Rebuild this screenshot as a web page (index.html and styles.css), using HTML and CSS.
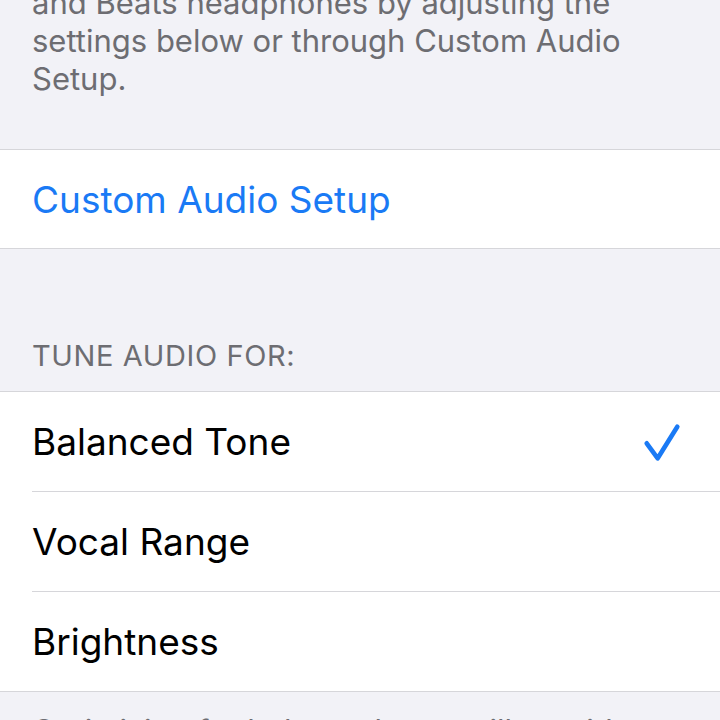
FILE: index.html
```html
<!DOCTYPE html>
<html lang="en">
<head>
<meta charset="UTF-8">
<meta name="viewport" content="width=device-width, initial-scale=1.0">
<title>Headphone Accommodations</title>
<link rel="stylesheet" href="styles.css">
</head>
<body>
<div class="page">
    <p class="group-footer intro">and Beats headphones by adjusting the settings below or through Custom Audio Setup.</p>

    <div class="group">
        <div class="row link">Custom Audio Setup</div>
    </div>

    <div class="group-header">TUNE AUDIO FOR:</div>
    <div class="group">
        <div class="row">
            <span>Balanced Tone</span>
            <svg class="check" width="40" height="40" viewBox="0 0 40 40">
                <polyline points="4.7,21.3 15.7,36.3 35.3,4.7" fill="none" stroke="#1a7af5" stroke-width="4.6" stroke-linecap="round" stroke-linejoin="round"/>
            </svg>
        </div>
        <div class="row">
            <span>Vocal Range</span>
        </div>
        <div class="row">
            <span>Brightness</span>
        </div>
    </div>
    <p class="group-footer">Optimizing for balanced tone will provide an even range of frequencies.</p>
</div>
</body>
</html>
```

FILE: styles.css
```css
body {
    font-family: Inter, 'Liberation Sans', sans-serif;
    margin: 0;
    padding: 0;
    background-color: #f2f2f7;
    color: #000;
    overflow: hidden;
}
.page {
    width: 720px;
}
.group-footer {
    margin: 0;
    padding: 0 32px;
    font-size: 31px;
    line-height: 38px;
    color: #6d6d72;
}
.intro {
    margin-top: -16px;
    margin-bottom: 51px;
}
.group {
    background-color: #fff;
    border-top: 1px solid #d6d6da;
    border-bottom: 1px solid #d6d6da;
}
.row {
    display: flex;
    align-items: center;
    justify-content: space-between;
    height: 99px;
    margin-left: 32px;
    padding-right: 38px;
    font-size: 37px;
    border-bottom: 1px solid #d6d6da;
}
.row:last-child {
    border-bottom: none;
}
.row.link {
    height: 98px;
    color: #1a7af5;
}
.group-header {
    height: 142px;
    display: flex;
    align-items: flex-end;
    padding: 0 32px 18px;
    box-sizing: border-box;
    font-size: 29px;
    letter-spacing: 0.6px;
    color: #6d6d72;
}
.group-footer:last-child {
    padding-top: 20px;
}
.check {
    display: block;
}
```
